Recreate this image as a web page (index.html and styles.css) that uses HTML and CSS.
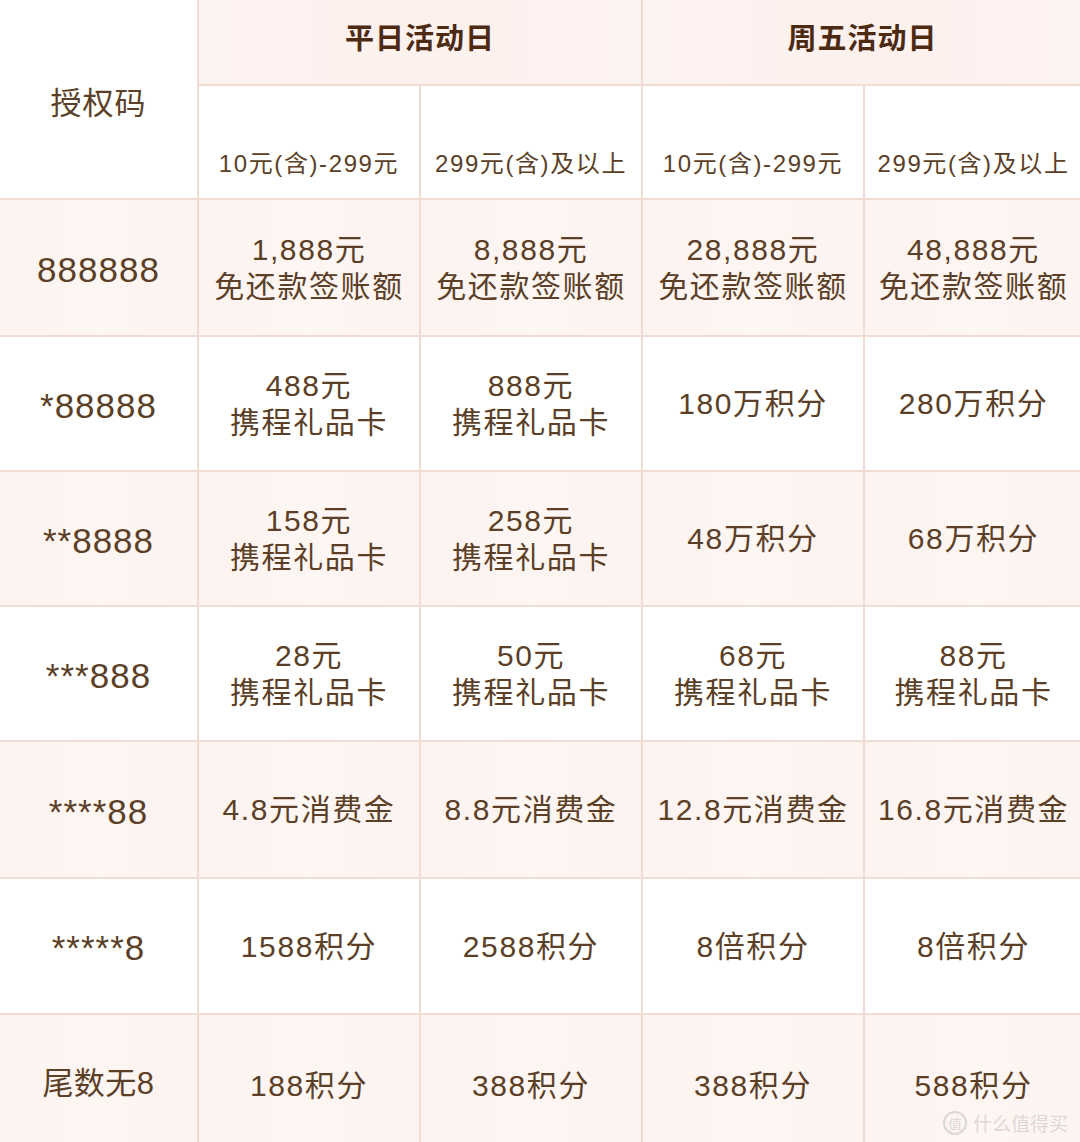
FILE: index.html
```html
<!DOCTYPE html>
<html lang="zh-CN">
<head>
<meta charset="utf-8">
<title>授权码奖励</title>
<link rel="stylesheet" href="styles.css">
</head>
<body>
<div class="page">
  <div class="table">
    <div class="cell code-head">授权码</div>
    <div class="cell day-head day1">平日活动日</div>
    <div class="cell day-head day2">周五活动日</div>
    <div class="cell range">10元(含)-299元</div>
    <div class="cell range">299元(含)及以上</div>
    <div class="cell range">10元(含)-299元</div>
    <div class="cell range">299元(含)及以上</div>

    <div class="cell code tint">888888</div>
    <div class="cell val tint"><p>1,888元<br>免还款签账额</p></div>
    <div class="cell val tint"><p>8,888元<br>免还款签账额</p></div>
    <div class="cell val tint"><p>28,888元<br>免还款签账额</p></div>
    <div class="cell val tint"><p>48,888元<br>免还款签账额</p></div>

    <div class="cell code">*88888</div>
    <div class="cell val"><p>488元<br>携程礼品卡</p></div>
    <div class="cell val"><p>888元<br>携程礼品卡</p></div>
    <div class="cell val"><p>180万积分</p></div>
    <div class="cell val"><p>280万积分</p></div>

    <div class="cell code tint">**8888</div>
    <div class="cell val tint"><p>158元<br>携程礼品卡</p></div>
    <div class="cell val tint"><p>258元<br>携程礼品卡</p></div>
    <div class="cell val tint"><p>48万积分</p></div>
    <div class="cell val tint"><p>68万积分</p></div>

    <div class="cell code">***888</div>
    <div class="cell val"><p>28元<br>携程礼品卡</p></div>
    <div class="cell val"><p>50元<br>携程礼品卡</p></div>
    <div class="cell val"><p>68元<br>携程礼品卡</p></div>
    <div class="cell val"><p>88元<br>携程礼品卡</p></div>

    <div class="cell code tint">****88</div>
    <div class="cell val tint"><p>4.8元消费金</p></div>
    <div class="cell val tint"><p>8.8元消费金</p></div>
    <div class="cell val tint"><p>12.8元消费金</p></div>
    <div class="cell val tint"><p>16.8元消费金</p></div>

    <div class="cell code">*****8</div>
    <div class="cell val"><p>1588积分</p></div>
    <div class="cell val"><p>2588积分</p></div>
    <div class="cell val"><p>8倍积分</p></div>
    <div class="cell val"><p>8倍积分</p></div>

    <div class="cell code last tint">尾数无8</div>
    <div class="cell val last tint"><p>188积分</p></div>
    <div class="cell val last tint"><p>388积分</p></div>
    <div class="cell val last tint"><p>388积分</p></div>
    <div class="cell val last tint"><p>588积分</p></div>
  </div>
  <div class="watermark"><span class="wm-circle">值</span><span class="wm-text">什么值得买</span></div>
</div>
</body>
</html>
```

FILE: styles.css
```css
* { box-sizing: border-box; }
html, body {
  margin: 0;
  padding: 0;
  background: #ffffff;
}
.page {
  position: relative;
  width: 1080px;
  height: 1142px;
  overflow: hidden;
  font-family: "Liberation Sans", "Noto Sans CJK SC", sans-serif;
  color: #5b3f27;
}
.table {
  display: grid;
  grid-template-columns: 197px 220px 220px 220px 217px;
  grid-template-rows: 84px 112px 135px 133px 133px 133px 135px 134px 130px;
  gap: 2px;
  background: #f1dcd3;
  width: 1080px;
  height: 1142px;
}
.cell {
  background: #ffffff;
  display: flex;
  flex-direction: column;
  align-items: center;
  justify-content: center;
  text-align: center;
}
.cell p {
  margin: 0;
}
.tint {
  background: linear-gradient(90deg, #fdf3f0 0%, #fef6f3 50%, #fdf3f0 100%);
}
.code-head {
  grid-row: 1 / span 2;
  font-size: 31px;
  letter-spacing: 1px;
  padding-top: 2px;
}
.day-head {
  grid-column: span 2;
  background: linear-gradient(90deg, #fdf3f0 0%, #fdf1ee 50%, #fdf3f0 100%);
  font-size: 29px;
  font-weight: 700;
  color: #4d2a12;
  letter-spacing: 1px;
  justify-content: flex-start;
  padding-top: 15px;
}
.range {
  font-size: 24px;
  justify-content: flex-end;
  padding-bottom: 19px;
  white-space: nowrap;
  letter-spacing: 1.6px;
}
.code {
  font-size: 35px;
  letter-spacing: 1px;
  padding-top: 4px;
}
.code.last {
  padding-top: 0;
  font-size: 31px;
  letter-spacing: 0.5px;
}
.val {
  font-size: 30px;
  line-height: 37px;
  letter-spacing: 1.6px;
  white-space: nowrap;
}
.val.last {
  padding-top: 10px;
}
.watermark {
  position: absolute;
  right: 12px;
  bottom: 6px;
  display: flex;
  align-items: center;
  gap: 6px;
  color: rgba(190, 190, 190, 0.55);
  font-family: "Noto Sans CJK SC", sans-serif;
}
.wm-circle {
  width: 24px;
  height: 24px;
  border: 2px solid rgba(190, 190, 190, 0.55);
  border-radius: 50%;
  font-size: 14px;
  line-height: 20px;
  text-align: center;
}
.wm-text {
  font-size: 19px;
}
```
